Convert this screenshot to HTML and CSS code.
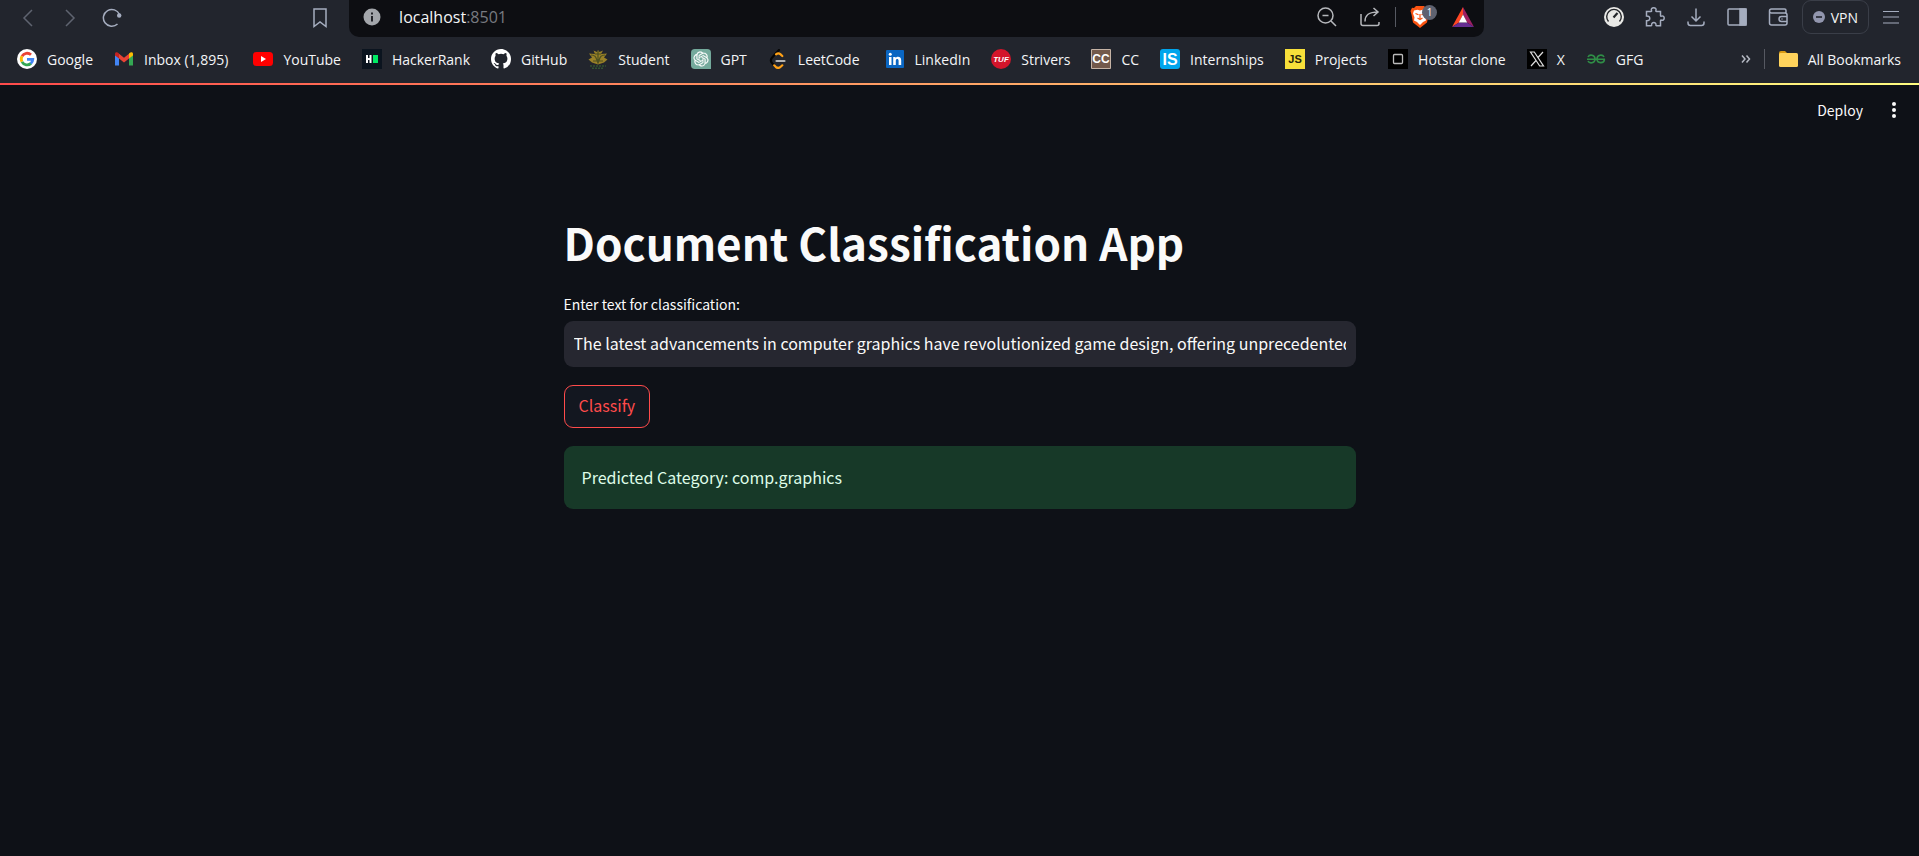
FILE: index.html
```html
<!DOCTYPE html>
<html lang="en">
<head>
<meta charset="utf-8">
<title>Document Classification App</title>
<link rel="stylesheet" href="styles.css">
</head>
<body>
<header class="browser">
  <div class="toolbar">
    <div class="nav">
      <button class="tool dim" aria-label="Back"><svg width="20" height="20" viewBox="0 0 20 20"><path d="M14 2 6 10l8 8"/></svg></button>
      <button class="tool dim" aria-label="Forward"><svg width="20" height="20" viewBox="0 0 20 20"><path d="m6 2 8 8-8 8"/></svg></button>
      <button class="tool" aria-label="Reload"><svg width="20" height="20" viewBox="0 0 20 20"><path d="M15.500 16A8.400 8.400 0 1 1 17.500 6.500" stroke-width="1.500"/><circle cx="17.200" cy="7.500" r="2.200" fill="currentColor" stroke="none"/></svg></button>
    </div>
    <button class="tool mark" aria-label="Bookmark this page"><svg width="20" height="20" viewBox="0 0 20 20"><path d="M4 1h12v17.500l-6-4.500-6 4.500z" stroke-width="1.500"/></svg></button>
    <div class="address">
      <svg class="info" width="18" height="18" viewBox="0 0 18 18"><circle cx="9" cy="9" r="8.500" fill="#a3a6ab"/><path d="M9 8v5.500M9 4.500v2" stroke="#14161b" stroke-width="1.800"/></svg>
      <p class="url">localhost<span class="port">:8501</span></p>
      <div class="address-tools">
        <button class="tool pale" aria-label="Zoom"><svg width="20" height="20" viewBox="0 0 20 20"><circle cx="8.500" cy="8.500" r="7.500"/><path d="M5.500 8.500h6M14 14l5 5"/></svg></button>
        <button class="tool pale" aria-label="Share"><svg width="22" height="20" viewBox="0 0 22 20"><path d="M2 7v9.500a2 2 0 0 0 2 2h14a2 2 0 0 0 2-2V15M6 14.500C6 8.500 9 5 19 5M14.500 1 19 5l-4.500 4"/></svg></button>
        <span class="sep"></span>
        <button class="tool brave" aria-label="Shields"><svg width="20" height="24" viewBox="0 0 20 24"><path d="M6 1h8l2 2 2-.2L19.500 6l-1 3.500-1.500 8L10 23l-7-5.500-1.500-8L.5 6 2 2.800l2 .2z" fill="#fb5412" stroke="none"/><path d="m4 5.500 3.500-.8L10 5.500l2.500-.8 3.500.8 1 3-1.500 4 .5 3-3 1.500L10 20l-3-3-3-1.500.5-3L3 8.500z" fill="#fff" stroke="none"/><path d="m5.500 8.500 3 1.200M14.500 8.500l-3 1.200M10 9v5M7.500 13l2.500 1.500 2.500-1.500" stroke="#fb5412" stroke-width="1.200"/></svg><span class="count">1</span></button>
        <button class="tool" aria-label="Rewards"><svg width="22" height="20" viewBox="0 0 22 20"><path d="M11 0 0 20l7-4.500 4-8z" fill="#ff4724" stroke="none"/><path d="m11 0 11 20-7-4.500-4-8z" fill="#9e1f63" stroke="none"/><path d="M0 20h22l-7-4.500H7z" fill="#662d91" stroke="none"/><path d="m11 7.500 4.200 8H6.800z" fill="#fff" stroke="none"/></svg></button>
      </div>
    </div>
    <div class="extensions">
      <button class="tool" aria-label="Speed test"><svg width="20" height="20" viewBox="0 0 20 20"><circle cx="10" cy="10" r="10" fill="#e9e9e6" stroke="none"/><path d="M4.500 14.500a7.300 7.300 0 1 1 11 0" stroke="#24262a" stroke-width="1.400"/><path d="m9.500 10.500 4-4.500" stroke="#24262a" stroke-width="2.200"/></svg></button>
      <button class="tool" aria-label="Extensions"><svg width="20" height="20" viewBox="0 0 20 20"><path d="M1.500 4.500H6c.6 0 .7-.4.500-1C5.800 1.800 7 .8 8.700.8s2.900 1 2.200 2.700c-.2.600 0 1 .6 1h4v4c0 .6.400.8 1 .6 1.500-.6 2.700.4 2.700 2s-1.200 2.600-2.700 2c-.6-.2-1 0-1 .6v5h-4c-.5 0-.7-.4-.6-.8.300-1.400-.7-2.300-2.100-2.300s-2.400.9-2.100 2.300c.1.400-.1.800-.6.800H1.500v-5c2.200.2 3.300-.8 3.300-2.300S3.700 8.900 1.500 9z"/></svg></button>
      <button class="tool" aria-label="Downloads"><svg width="20" height="20" viewBox="0 0 20 20"><path d="M10 1.500v12M5.500 9.500 10 14l4.500-4.500M2 14.500V16a2.500 2.500 0 0 0 2.500 2.500h11A2.500 2.500 0 0 0 18 16v-1.500"/></svg></button>
      <button class="tool" aria-label="Sidebar"><svg width="20" height="20" viewBox="0 0 20 20"><rect x="1" y="2" width="18" height="16" rx="1"/><path d="M13 2h6v16h-6z" fill="currentColor"/></svg></button>
      <button class="tool" aria-label="Wallet"><svg width="20" height="20" viewBox="0 0 20 20"><path d="M18 6V3.500A1.500 1.500 0 0 0 16.500 2H3.500a2 2 0 0 0 0 4H17a2 2 0 0 1 2 2v8a2 2 0 0 1-2 2H3.500a2 2 0 0 1-2-2V4M19 9.500h-5.500a2.500 2.500 0 0 0 0 5H19M13.500 12h1"/></svg></button>
      <button class="vpn"><svg width="12" height="12" viewBox="0 0 12 12"><circle cx="6" cy="6" r="6" fill="#9296ae"/><path d="M3 6h6" stroke="#20232b" stroke-width="1.600"/></svg>VPN</button>
      <button class="tool" aria-label="Menu"><svg width="20" height="20" viewBox="0 0 20 20"><path d="M2 4.500h16M2 10h16M2 16h16" stroke-width="1.200"/></svg></button>
    </div>
  </div>
  <nav class="bookmarks" aria-label="Bookmarks">
    <a href="#"><svg width="20" height="20" viewBox="0 0 20 20"><circle cx="10" cy="10" r="10" fill="#fff"/><g fill="none" stroke-width="2.800"><path d="M5 7.200A5.800 5.800 0 0 1 14 5.800" stroke="#ea4335"/><path d="M5 12.800A5.800 5.800 0 0 1 5 7.200" stroke="#fbbc05"/><path d="M5 12.800a5.800 5.800 0 0 0 9 1.600" stroke="#34a853"/><path d="M10 10.300h5.800a5.800 5.800 0 0 1-2 4.200" stroke="#4285f4"/></g></svg>Google</a>
    <a class="spaced" href="#"><svg width="20" height="20" viewBox="0 0 20 20"><path d="M1 5v11.500h4V9z" fill="#4285f4"/><path d="M15 9v7.500h4V5z" fill="#34a853"/><path d="M5 9.500V4.800l5 4 5-4v4.700l-5 4z" fill="#ea4335"/><path d="M1 5c0-2 2-2.500 4-.5v5L1 6.500z" fill="#c5221f"/><path d="M19 5c0-2-2-2.500-4-.5v5l4-3z" fill="#fbbc04"/></svg>Inbox (1,895)</a>
    <a href="#"><svg width="20" height="20" viewBox="0 0 20 20"><rect y="3" width="20" height="14" rx="3.500" fill="#f00"/><path d="m8 7 5 3-5 3z" fill="#fff"/></svg>YouTube</a>
    <a href="#"><svg width="20" height="20" viewBox="0 0 20 20"><path fill="#0b141f" d="M0 0h20v20H0z"/><path d="M4 6h2v3h1.500V6h2v8h-2v-3H6v3H4z" fill="#fff"/><path d="M11 6h5v8h-5z" fill="#00ea64"/></svg>HackerRank</a>
    <a href="#"><svg width="20" height="20" viewBox="0 0 16 16"><path fill="#fff" d="M8 0C3.580 0 0 3.580 0 8c0 3.540 2.290 6.530 5.470 7.590.4.070.55-.17.55-.38 0-.19-.01-.82-.01-1.490-2.010.37-2.530-.49-2.690-.94-.09-.23-.48-.94-.82-1.130-.28-.15-.68-.52-.01-.53.63-.01 1.080.58 1.230.82.72 1.210 1.870.87 2.330.66.070-.52.28-.87.51-1.070-1.780-.2-3.640-.89-3.640-3.950 0-.87.31-1.590.82-2.150-.08-.2-.36-1.020.08-2.120 0 0 .67-.21 2.200.82a7.600 7.600 0 0 1 4 0c1.530-1.040 2.200-.82 2.200-.82.44 1.100.16 1.920.08 2.120.51.56.82 1.270.82 2.150 0 3.070-1.870 3.750-3.650 3.950.29.25.54.73.54 1.480 0 1.070-.01 1.930-.01 2.200 0 .21.15.46.55.38A8.010 8.010 0 0 0 16 8c0-4.420-3.580-8-8-8z"/></svg>GitHub</a>
    <a href="#"><svg width="20" height="20" viewBox="0 0 20 20"><path d="M7 5 5.500 1.500 9 3l1-2 1.500 2L15 1.500 13 5l6-.5-3 4 3.500 2-3.500 3-6 2-6-2-3.500-3 3.500-2-3-4z" fill="#9a8128"/><path d="M3 6c5 0 5 3 7 8 2-5 2-8 7-8M5 12h10M7 5h6M10 2v12" fill="none" stroke="#4e511f" stroke-width="1.200"/><path d="M2 17h16M4 19.300h12" stroke="#315231" stroke-width="1.400" stroke-dasharray="2 1"/></svg>Student</a>
    <a href="#"><svg width="20" height="20" viewBox="0 0 32 32"><path d="M6 0h20a6 6 0 0 1 6 6v26H6a6 6 0 0 1-6-6V6a6 6 0 0 1 6-6z" fill="#74aa9c"/><path transform="translate(4 4)" fill="#fff" stroke="#fff" stroke-width=".3" d="M22.2819 9.8211a5.9847 5.9847 0 0 0-.5157-4.9108 6.0462 6.0462 0 0 0-6.5098-2.9A6.0651 6.0651 0 0 0 4.9807 4.1818a5.9847 5.9847 0 0 0-3.9977 2.9 6.0462 6.0462 0 0 0 .7427 7.0966 5.98 5.98 0 0 0 .511 4.9107 6.051 6.051 0 0 0 6.5146 2.9001A5.9847 5.9847 0 0 0 13.2599 24a6.0557 6.0557 0 0 0 5.7718-4.2058 5.9894 5.9894 0 0 0 3.9977-2.9001 6.0557 6.0557 0 0 0-.7475-7.0729zm-9.022 12.6081a4.4755 4.4755 0 0 1-2.8764-1.0408l.1419-.0804 4.7783-2.7582a.7948.7948 0 0 0 .3927-.6813v-6.7369l2.02 1.1686a.071.071 0 0 1 .038.052v5.5826a4.504 4.504 0 0 1-4.4945 4.4944zm-9.6607-4.1254a4.4708 4.4708 0 0 1-.5346-3.0137l.142.0852 4.783 2.7582a.7712.7712 0 0 0 .7806 0l5.8428-3.3685v2.3324a.0804.0804 0 0 1-.0332.0615L9.74 19.9502a4.4992 4.4992 0 0 1-6.1408-1.6464zM2.3408 7.8956a4.485 4.485 0 0 1 2.3655-1.9728V11.6a.7664.7664 0 0 0 .3879.6765l5.8144 3.3543-2.0201 1.1685a.0757.0757 0 0 1-.071 0l-4.8303-2.7865A4.504 4.504 0 0 1 2.3408 7.872zm16.5963 3.8558L13.1038 8.364 15.1192 7.2a.0757.0757 0 0 1 .071 0l4.8303 2.7913a4.4944 4.4944 0 0 1-.6765 8.1042v-5.6772a.79.79 0 0 0-.407-.667zm2.0107-3.0231l-.142-.0852-4.7735-2.7818a.7759.7759 0 0 0-.7854 0L9.409 9.2297V6.8974a.0662.0662 0 0 1 .0284-.0615l4.8303-2.7866a4.4992 4.4992 0 0 1 6.6802 4.66zM8.3065 12.863l-2.02-1.1638a.0804.0804 0 0 1-.038-.0567V6.0742a4.4992 4.4992 0 0 1 7.3757-3.4537l-.142.0805L8.704 5.459a.7948.7948 0 0 0-.3927.6813zm1.0976-2.3654l2.602-1.4998 2.6069 1.4998v2.9994l-2.5974 1.4997-2.6067-1.4997Z"/></svg>GPT</a>
    <a class="spaced" href="#"><svg width="20" height="20" viewBox="0 0 20 20"><g fill="none" stroke-width="2.200" stroke-linecap="round"><path d="M11 1 4.200 8.500c-1.500 1.700-1.500 4.200 0 5.800l2 2" stroke="#050505"/><path d="M8 5.300c1.500-1.300 3-1.300 4.300-.2l2 1.900M6.200 16.300l1.500 1.500c1.500 1.300 3.600 1.300 5 0l1.600-1.500" stroke="#ffa116"/><path d="M8.500 12h8" stroke="#b3b3b3"/></g></svg>LeetCode</a>
    <a href="#"><svg width="20" height="20" viewBox="0 0 20 20"><rect x="1" y="1" width="18" height="18" rx="1" fill="#0a66c2"/><path d="M4 8h2.500v8H4zM8.200 8h2.400v1.100c1.300-2 5.600-1.800 5.600 2.100V16h-2.600v-4.300c0-2.200-2.800-2-2.800 0V16H8.200z" fill="#fff"/><circle cx="5.250" cy="5.200" r="1.500" fill="#fff"/></svg>LinkedIn</a>
    <a href="#"><svg width="20" height="20" viewBox="0 0 20 20"><circle cx="10" cy="10" r="10" fill="#d3152b"/><text x="10" y="13" class="logo-tuf">TUF</text></svg>Strivers</a>
    <a href="#"><svg width="20" height="20" viewBox="0 0 20 20"><path fill="#73594b" stroke="#c5b3a5" d="M.5.500h19v19H.5z"/><text x="10" y="14" class="logo-cc">CC</text></svg>CC</a>
    <a href="#"><svg width="20" height="20" viewBox="0 0 20 20"><rect width="20" height="20" rx="3" fill="#00a5ec"/><text x="10" y="16" class="logo-is">IS</text></svg>Internships</a>
    <a href="#"><svg width="20" height="20" viewBox="0 0 20 20"><path fill="#f7df3a" d="M0 0h20v20H0z"/><text x="10" y="14" class="logo-js">JS</text></svg>Projects</a>
    <a href="#"><svg width="20" height="20" viewBox="0 0 20 20"><path d="M0 0h20v20H0z"/><rect x="5.500" y="5.500" width="9" height="9" rx="1" fill="none" stroke="#bbb" stroke-width="1.300"/></svg>Hotstar clone</a>
    <a href="#"><svg width="20" height="20" viewBox="0 0 20 20"><path d="M0 0h20v20H0z"/><path d="M3.500 3h3.800l9.200 14h-3.800zM16 3l-5.500 6M9 11.500 4 17" fill="none" stroke="#ddd" stroke-width="1.200"/></svg>X</a>
    <a href="#"><svg width="20" height="20" viewBox="0 0 20 20"><path d="M2 8c1.500-3 7-2.500 7 2s-5.500 5-7 2M1 10.300h18M18 8c-1.500-3-7-2.500-7 2s7 5 7.500.3" fill="none" stroke="#2f8d46" stroke-width="1.600"/></svg>GFG</a>
    <div class="overflow">
      <button class="more" aria-label="More bookmarks"><svg width="10" height="10" viewBox="0 0 10 10"><path d="m1 1.500 3 3.500-3 3.500M5.500 1.500l3 3.500-3 3.500" stroke-width="1.500"/></svg></button>
      <span class="sep"></span>
      <a href="#"><svg width="20" height="20" viewBox="0 0 20 20"><path d="M1 4a2 2 0 0 1 2-2h4l2 2v3H1z" fill="#d99a13"/><rect x="1" y="4" width="19" height="14" rx="1.500" fill="#ffd35c"/></svg>All Bookmarks</a>
    </div>
  </nav>
</header>
<div class="decoration"></div>
<div class="app-header">
  <button class="deploy">Deploy</button>
  <button class="kebab" aria-label="Main menu"><svg width="18" height="18" viewBox="0 0 18 18" fill="#fafafa"><circle cx="9" cy="3" r="2"/><circle cx="9" cy="9" r="2"/><circle cx="9" cy="15" r="2"/></svg></button>
</div>
<main class="app">
  <h1>Document Classification App</h1>
  <label for="text">Enter text for classification:</label>
  <input id="text" type="text" value="The latest advancements in computer graphics have revolutionized game design, offering unprecedented realism and immersive experiences for players.">
  <button class="classify">Classify</button>
  <p class="alert" role="alert">Predicted Category: comp.graphics</p>
</main>
</body>
</html>
```
FILE: styles.css
```css
* { box-sizing: border-box; }

body {
  margin: 0;
  min-height: 100vh;
  background: #0e1117;
  color: #fafafa;
  font-family: "Noto Sans CJK SC", "Noto Sans", sans-serif;
}

button {
  border: 0;
  padding: 0;
  background: none;
  color: inherit;
  font: inherit;
}

h1, p { margin: 0; }
svg { display: block; flex: none; }

/* Browser chrome */
.browser {
  background: #22252d;
  color: #f4f5f7;
  font-family: "Open Sans", "Noto Sans", sans-serif;
  font-size: 14px;
}

.toolbar {
  display: flex;
  align-items: center;
  height: 37px;
  padding-right: 18px;
}

.tool {
  display: flex;
  color: #a5adbf;
  position: relative;
}

.tool svg, .more svg {
  fill: none;
  stroke: currentColor;
  stroke-width: 1.5;
}

.nav { display: flex; gap: 22px; padding-left: 18px; flex: 1 1 0; }
.nav, .mark { padding-bottom: 2px; }
.dim { color: #5f6470; }
.mark { margin-right: 19px; }
.pale { color: #b5b7bb; }

.address {
  display: flex;
  align-items: center;
  flex: 0 0 59.7%;
  height: 37px;
  padding: 0 10px 3px 14px;
  border-radius: 0 0 10px 10px;
  background: #0d0e12;
}

.url { margin-left: 18px; font-size: 16px; line-height: 24px; }
.port { color: #777a80; }

.address-tools {
  display: flex;
  align-items: center;
  gap: 14px;
  margin-left: auto;
}

.address-tools > :first-child { margin-right: 8px; }
.sep { width: 1px; height: 20px; background: #565962; }
.brave { margin-right: 8px; }

.count {
  position: absolute;
  left: 12px;
  top: 0;
  width: 15px;
  height: 15px;
  border-radius: 8px;
  background: #5e6270;
  color: #fff;
  font-size: 10px;
  line-height: 15px;
}

.extensions {
  display: flex;
  align-items: center;
  justify-content: flex-end;
  gap: 21px;
  flex: 0 0 auto;
  width: 417px;
  padding-bottom: 3px;
}

.vpn {
  display: flex;
  align-items: center;
  gap: 6px;
  height: 34px;
  padding: 0 10px;
  margin: 0 -9px 0 -7px;
  border: 1px solid #3a3e48;
  border-radius: 9px;
}

.bookmarks {
  display: flex;
  align-items: center;
  gap: 21px;
  height: 46px;
  padding: 0 18px 2px 17px;
}

.bookmarks a {
  display: flex;
  align-items: center;
  gap: 10px;
  color: inherit;
  text-decoration: none;
  white-space: nowrap;
}

.bookmarks .spaced { margin-right: 4px; }

.overflow {
  display: flex;
  align-items: center;
  gap: 13px;
  margin-left: auto;
}

.more { color: #b4b8c2; }

.logo-tuf, .logo-cc, .logo-is, .logo-js {
  font-family: "Liberation Sans", sans-serif;
  font-weight: 700;
  text-anchor: middle;
  fill: #fff;
}

.logo-tuf { font-size: 8px; font-style: italic; }
.logo-cc { font-size: 12px; }
.logo-is { font-size: 16px; }
.logo-js { font-size: 11px; fill: #24220d; }

/* Application */
.decoration {
  height: 2px;
  background: linear-gradient(90deg, #ff4b4b, #fffd80);
}

.app-header {
  display: flex;
  align-items: center;
  justify-content: flex-end;
  gap: 22px;
  height: 49px;
  padding-right: 16px;
  font-size: 14px;
}

.app {
  display: flex;
  flex-direction: column;
  align-items: stretch;
  max-width: 792px;
  margin: 0 auto;
  padding-top: 73px;
}

h1 {
  font-size: 44px;
  font-weight: 700;
  line-height: 70px;
}

label {
  margin-top: 16px;
  font-size: 14px;
  line-height: 22px;
}

input {
  height: 46px;
  margin-top: 6px;
  padding: 0 10px 2px;
  border: 0;
  border-radius: 9px;
  background: #262730;
  color: #fafafa;
  font: inherit;
  font-size: 16px;
}

.classify {
  align-self: flex-start;
  height: 43px;
  margin-top: 18px;
  padding: 0 14px 3px;
  border: 1px solid #ff4b4b;
  border-radius: 9px;
  background: #131720;
  color: #ff4b4b;
  font-size: 16px;
}

.alert {
  margin-top: 18px;
  padding: 18px;
  border-radius: 9px;
  background: #173928;
  color: #dffde9;
  font-size: 16px;
  line-height: 27px;
}
```
